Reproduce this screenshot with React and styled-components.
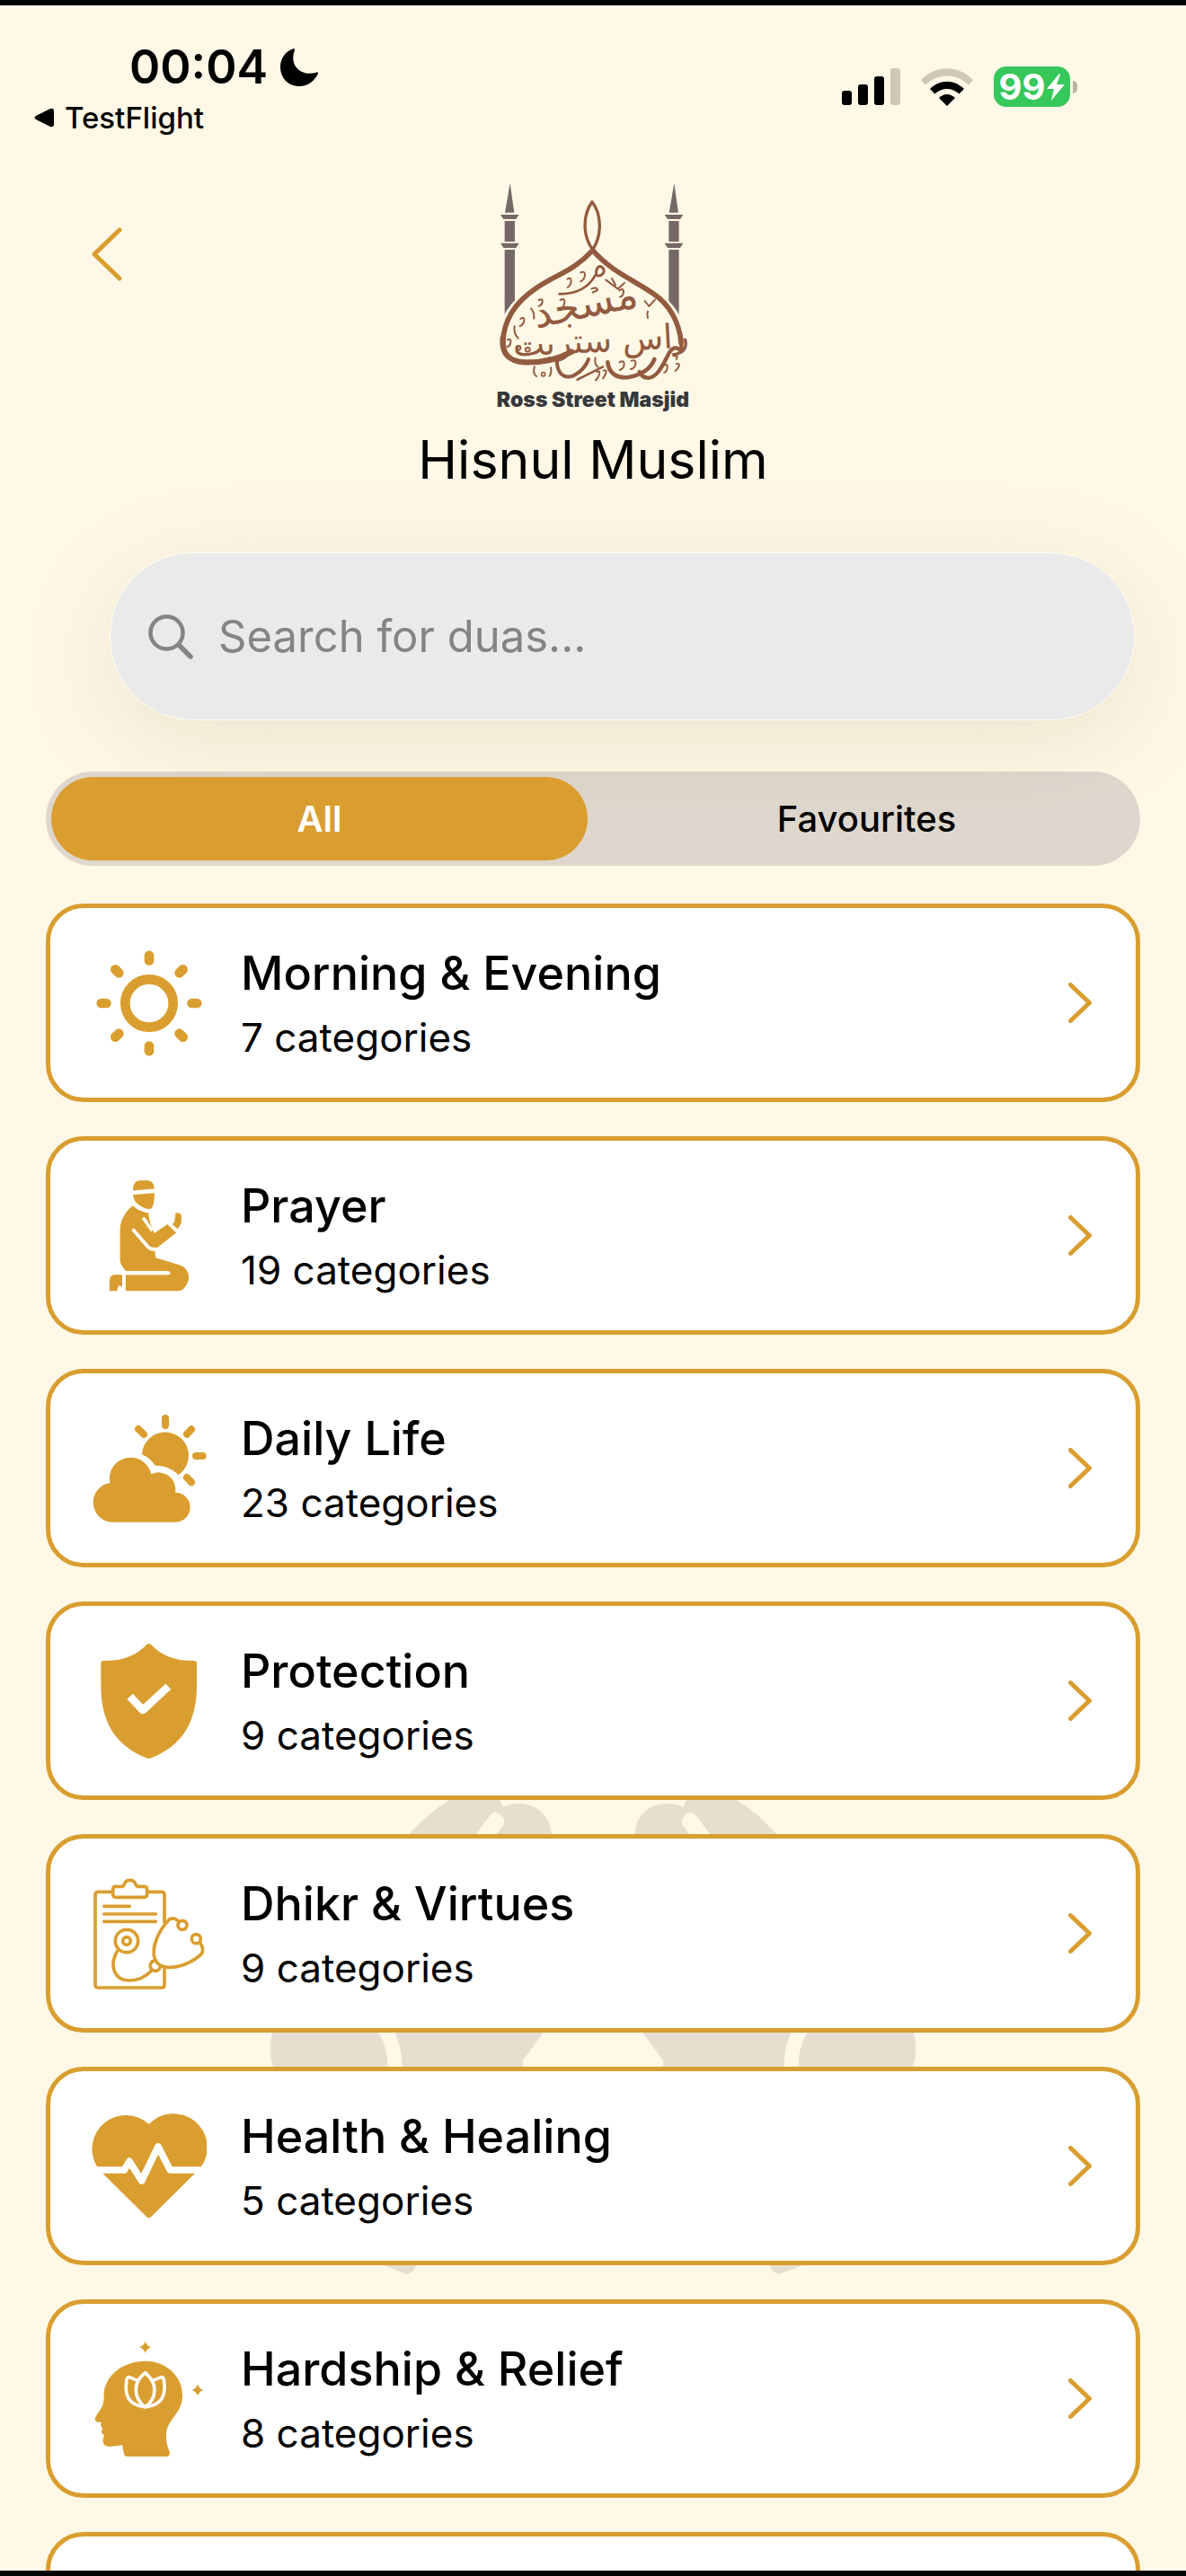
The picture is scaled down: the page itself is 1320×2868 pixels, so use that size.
import React, { useState } from 'react'
import styled, { createGlobalStyle } from 'styled-components'

const gold = '#d99e2f'
const cream = '#fff8e6'

const GlobalStyle = createGlobalStyle`
    * {
        box-sizing: border-box;
    }
    body {
        margin: 0;
        background: ${cream};
        color: #000;
        font-family: Inter, "Liberation Sans", sans-serif;
    }
    button, input {
        font-family: inherit;
    }
`

const Screen = styled.div`
    display: flex;
    flex-direction: column;
    height: 100vh;
    overflow: hidden;
    border-top: 6px solid #000;
    border-bottom: 6px solid #000;
    background: ${cream};
`

const StatusBar = styled.div`
    display: flex;
    flex-shrink: 0;
    justify-content: space-between;
    align-items: flex-start;
    padding: 39px 121px 0 38px;
`
const StatusLeft = styled.div`
    display: flex;
    flex-direction: column;
    gap: 4px;
`
const Clock = styled.div`
    display: flex;
    align-items: center;
    gap: 14px;
    padding-left: 106px;
    font-size: 52px;
    font-weight: 600;
    line-height: 60px;
`
const BackToApp = styled.a`
    display: flex;
    align-items: center;
    gap: 12px;
    color: #000;
    font-size: 33px;
    font-weight: 500;
    line-height: 44px;
    text-decoration: none;
`
const StatusIcons = styled.div`
    display: flex;
    align-items: center;
    gap: 23px;
    padding-top: 29px;
`
const BatteryWrap = styled.div`
    display: flex;
    align-items: center;
    gap: 3px;
`
const BatteryBody = styled.div`
    display: flex;
    align-items: center;
    justify-content: center;
    gap: 2px;
    width: 85px;
    height: 45px;
    border-radius: 14px;
    background: #36c85a;
    color: #fff;
    font-size: 40px;
    font-weight: 700;
`
const BatteryTip = styled.div`
    width: 5px;
    height: 14px;
    border-radius: 0 5px 5px 0;
    background: #b9b3a6;
`

const Header = styled.header`
    display: grid;
    flex-shrink: 0;
    grid-template-columns: 1fr auto 1fr;
    padding: 47px 51px 0;
`
const BackButton = styled.button`
    align-self: start;
    justify-self: start;
    margin-top: 40px;
    padding: 12px 49px;
    border: 0;
    background: none;
    svg {
        display: block;
    }
`
const Brand = styled.div`
    display: flex;
    flex-direction: column;
    align-items: center;
`
const BrandName = styled.div`
    color: #37383c;
    font-size: 23px;
    font-weight: 900;
    line-height: 34px;
`
const Title = styled.h1`
    margin: 14px 0 0;
    font-size: 59px;
    font-weight: 400;
    line-height: 72px;
`

const SearchBox = styled.label`
    display: flex;
    flex-shrink: 0;
    align-items: center;
    gap: 28px;
    height: 187px;
    margin: 67px 57px 0 122px;
    padding: 0 42px;
    border: 1px solid #fffdf2;
    border-radius: 93px;
    background: #eaeaea;
    box-shadow: 0 24px 110px rgba(90, 90, 40, 0.13);
`
const SearchInput = styled.input`
    flex: 1;
    min-width: 0;
    padding: 0;
    border: 0;
    outline: 0;
    background: none;
    font-size: 49px;
    &::placeholder {
        color: #848484;
        opacity: 1;
    }
`

const Tabs = styled.div`
    display: flex;
    flex-shrink: 0;
    gap: 12px;
    margin: 57px 51px 0;
    padding: 6px;
    border-radius: 53px;
    background: rgba(120, 112, 130, 0.24);
`
const Tab = styled.button`
    flex: 1;
    height: 93px;
    border: 0;
    border-radius: 47px;
    background: ${({ $active }) => ($active ? gold : 'transparent')};
    color: ${({ $active }) => ($active ? '#fff' : '#000')};
    font-size: 40px;
    font-weight: ${({ $active }) => ($active ? 600 : 500)};
`

const List = styled.main`
    position: relative;
    display: flex;
    flex-shrink: 0;
    flex-direction: column;
    gap: 38px;
    padding: 42px 51px 0;
`
const Watermark = styled.svg`
    position: absolute;
    top: 1026px;
    left: 50%;
    width: 720px;
    height: 545px;
    margin-left: -360px;
`
const Card = styled.button`
    position: relative;
    display: flex;
    align-items: center;
    gap: 38px;
    width: 100%;
    min-height: 221px;
    padding: 0 49px 0 46px;
    border: 5px solid ${gold};
    border-radius: 42px;
    background: #fff;
    color: #000;
    text-align: left;
`
const CardIcon = styled.svg`
    flex-shrink: 0;
    width: 128px;
    height: 128px;
`
const CardText = styled.span`
    display: flex;
    flex: 1;
    flex-direction: column;
`
const CardTitle = styled.span`
    font-size: 52px;
    font-weight: 500;
    line-height: 76px;
`
const CardCount = styled.span`
    font-size: 44px;
    line-height: 66px;
`

const SunIcon = () => (
    <CardIcon viewBox="-64 -64 128 128" fill="none" stroke={gold} strokeWidth="10.7" strokeLinecap="round">
        <circle r="26.7" />
        {[0, 45, 90, 135, 180, 225, 270, 315].map(angle => (
            <path key={angle} d="M0 -53.2V-47.6" transform={`rotate(${angle})`} />
        ))}
    </CardIcon>
)

const PrayerIcon = () => (
    <CardIcon viewBox="0 0 128 128" fill={gold}>
        <path d="M46.1 13.4V12C46.1 6 49 2.2 54 2.2H62C66.5 2.2 69.8 6 69.8 11.5Z" />
        <path d="M46.1 18.2L69.8 16.2C70 20 69.8 24 68.9 28C68 32.5 66 34.6 63 34.2C54 32 46 26 46.1 18.2Z" />
        <path d="M46.1 30.2C50 34.5 56 37.5 63 38.2L65 49.2L69.8 60.9L84.4 50.9L94.1 60.5L75 75.5Q72 78 70.3 81.5L71.3 88.2L98 96.5C105 99 108 104 108.1 110C108 116 103 125.2 97 125.2H37.9V107.2H84V103.2H38.3C34 98 31.6 95 31.6 89.9V56.5C32 46 38 36 46.1 30.2Z" />
        <path d="M93.5 38.2C98 37.8 99.9 39.5 99.9 42V48Q99.9 51 95.5 56.2L89.7 50.9Q92.6 49 92.6 45Z" />
        <path d="M19.9 125.2V115C19.9 110 22 107.2 26 107.2H34V120.5L30.1 118.9L28.2 125.2Z" />
        <path d="M58.2 45L66.5 57" stroke="#fff" strokeWidth="3.6" strokeLinecap="round" />
        <path d="M46.5 57.5L63 76.5Q66 80 74 78.5" fill="none" stroke="#fff" strokeWidth="3.8" strokeLinecap="round" />
        <path d="M34 105.2H85.5" stroke="#fff" strokeWidth="4" strokeLinecap="round" />
    </CardIcon>
)

const DailyIcon = () => (
    <CardIcon viewBox="66 93 384 384" fill={gold}>
        <path d="M132 464A66 66 0 0 1 127 333A70 70 0 0 1 265 304A56 56 0 0 1 345 365A49.5 49.5 0 0 1 346 464Z" />
        <path d="M234 238A78 78 0 1 1 360 303Q355 308 350 301Q320 274 278 275Q262 250 234 238Z" />
        <path
            d="M312 117V141M222 153L240 171M399 154L384 170M414 243H437M384 315L399 331"
            stroke={gold}
            strokeWidth="24"
            strokeLinecap="round"
        />
    </CardIcon>
)

const ShieldIcon = () => (
    <CardIcon viewBox="66 90 384 384" fill={gold}>
        <path d="M250 93Q257 87 264 93C300 130 340 147 408 147Q417 147 417 156V230C417 350 370 430 264 472Q257 475 250 472C144 430 97 350 97 230V156Q97 147 106 147C174 147 214 130 250 93Z" />
        <path d="M194 266L237 312L322 233" fill="none" stroke="#fff" strokeWidth="26" strokeLinejoin="round" />
    </CardIcon>
)

const ClipboardIcon = () => (
    <CardIcon viewBox="66 59 384 384" fill="none" stroke={gold} strokeWidth="11" strokeLinecap="round" strokeLinejoin="round">
        <path d="M132 111H88Q78 111 78 121V421Q78 431 88 431H299Q309 431 309 421V368M255 111H299Q309 111 309 121V212" />
        <path d="M147 93H165Q173 93 175 86A20 20 0 0 1 213 86Q215 93 223 93H241Q251 93 251 103V119Q251 129 241 129H147Q137 129 137 119V103Q137 93 147 93Z" />
        <path d="M107 159H193M107 185H280M107 210H280" />
        <circle cx="183" cy="275" r="38" />
        <circle cx="183" cy="275" r="13" />
        <path d="M153 306C120 360 145 407 192 407C225 407 248 393 266 374" />
        <path d="M273 342A17 17 0 1 0 295 363" />
        <path d="M355 208Q340 195 325 203C285 245 265 300 277 335C283 350 295 362 320 363C360 365 405 345 432 319Q443 305 430 284" />
        <circle cx="369" cy="222" r="15" />
        <circle cx="415" cy="268" r="15" />
    </CardIcon>
)

const HeartIcon = () => (
    <CardIcon viewBox="66 56 384 384" fill={gold}>
        <path d="M257 107A113 113 0 0 0 84 249L104 272L250 417Q257 423 264 417L410 272L432 249A113 113 0 0 0 257 107Z" />
        <path
            d="M60 260H175L192 231L233 296L288 182L328 260H456"
            fill="none"
            stroke="#fff"
            strokeWidth="23"
            strokeLinejoin="round"
        />
    </CardIcon>
)

const MindIcon = () => (
    <CardIcon viewBox="66 54 384 384" fill={gold}>
        <path d="M245 119C315 119 369 170 369 232C369 300 315 310 315 370C315 395 320 405 327 424Q328 438 316 438H185Q176 438 174 430L168 400C150 402 135 406 120 404C104 402 100 388 108 366Q98 362 99 352L103 346Q94 336 98 323H88Q74 322 78 308C90 285 107 275 107 240C103 170 170 119 245 119Z" />
        <path
            d="M245 158C225 175 214 190 214 215C214 240 228 260 245 273C262 260 276 240 276 215C276 190 262 175 245 158ZM219 184L192 173Q184 172 183 182C175 230 185 265 245 273C305 265 315 230 307 182Q306 172 298 173L271 184"
            fill="none"
            stroke="#fff"
            strokeWidth="11"
            strokeLinejoin="round"
        />
        <path d="M245 54Q250 68 264 73Q250 78 245 92Q240 78 226 73Q240 68 245 54ZM420 197Q425 211 439 216Q425 221 420 235Q415 221 401 216Q415 211 420 197Z" />
    </CardIcon>
)

const Minaret = ({ x }) => (
    <g transform={`translate(${x} 0)`} fill="#766867">
        <path d="M0 42L14 140H-17Z" />
        <path d="M-32 147H30L20 162H-22ZM-18 168H16V237H-18ZM-32 242H30L20 258H-22ZM-18 264H16V482H-18Z" />
    </g>
)

const MosqueLogo = () => (
    <svg width="220" height="228" viewBox="87 30 660 684" role="img" aria-label="مسجد راس ستريت">
        <Minaret x={140} />
        <Minaret x={688} />
        <path
            d="M110 600C108 500 150 440 230 395C290 360 350 335 414 270C480 340 560 370 620 415C680 450 718 510 716 600Z"
            fill={cream}
            stroke={cream}
            strokeWidth="28"
        />
        <g fill="none" stroke="#925b40" strokeLinecap="round" strokeLinejoin="round">
            <path d="M414 104C384 145 380 215 416 264C448 215 446 145 414 104Z" strokeWidth="10" />
            <path d="M416 266C350 338 295 345 225 394C160 438 118 500 116 575" strokeWidth="17" />
            <path d="M116 560C112 610 135 638 190 640C240 641 300 630 345 605" strokeWidth="19" />
            <path d="M416 266C480 340 560 368 620 412C670 445 706 505 711 575" strokeWidth="17" />
            <path d="M710 560Q714 590 711 602C695 585 680 590 668 615C650 650 630 695 598 692Q580 690 572 672" strokeWidth="13" />
            <path d="M466 640C470 680 500 694 535 690C580 682 610 660 622 630" strokeWidth="14" />
            <path d="M296 635C298 680 320 696 352 685C380 670 395 650 402 630" strokeWidth="12" />
            <path d="M365 698L450 655M305 412C360 412 400 395 424 350" strokeWidth="8" />
            <path d="M428 350C425 320 440 315 450 325C460 340 445 355 428 350" strokeWidth="9" />
            <path
                d="M332 362q12-8 12 6t-12 22M376 340q14-6 14 8t-14 22M308 432q16-8 14 8t-14 26M236 432q14-6 12 6t-12 14M210 460q12 12 10 34M175 495q14-8 12 6t-14 18M155 520q-4 22 12 40M132 565q12-6 10 8t-12 16M222 655q-8 20 6 32M276 658q4 18-4 28M505 640q16-8 16 6t-14 20M545 635q16-6 14 10t-16 18M425 625q-4 22 8 30M430 672q12-6 8 8t-12 20M452 668q12-4 8 8t-10 18M655 650q12-6 10 8t-10 16M690 620q12-6 6 10M696 645q12-2 8 8t-12 16M505 400q14-10 14 4t-12 18M460 365l40 30l22-20M480 360l12 22M590 435l14 18l20-22M600 470q-4 12 0 22M412 395q20-8 20 4l-16 8"
                strokeWidth="6"
            />
            <circle cx="168" cy="592" r="7" strokeWidth="6" />
            <circle cx="199" cy="598" r="7" strokeWidth="6" />
            <circle cx="251" cy="680" r="6" strokeWidth="5" />
        </g>
        <g fill="#925b40" fontFamily='"DejaVu Sans", sans-serif' textAnchor="middle">
            <text x="400" y="490" fontSize="136" transform="rotate(-12 400 490)">مسجد</text>
            <text x="445" y="605" fontSize="112" transform="rotate(-3 445 605)">راس ستريت</text>
        </g>
    </svg>
)

const Hand = () => (
    <>
        <path d="M420 2090C440 2060 465 2025 499 2005Q530 1985 553 1998L560 2012Q568 2008 577 2008C600 2008 614 2025 614 2045V2230L604 2264L582 2294V2330L463 2523Q458 2534 450 2531L400 2512L330 2400Q306 2330 304 2302Q298 2280 303 2264Z" />
        <path d="M529 2043L544 2023Q551 2014 558 2021Q564 2028 559 2034L552 2043L540 2066H515Z" fill={cream} />
        <path d="M422 2248C436 2270 441 2285 439 2310" fill="none" stroke={cream} strokeWidth="16" />
    </>
)

const categories = [
    { name: 'Morning & Evening', count: 7, Icon: SunIcon },
    { name: 'Prayer', count: 19, Icon: PrayerIcon },
    { name: 'Daily Life', count: 23, Icon: DailyIcon },
    { name: 'Protection', count: 9, Icon: ShieldIcon },
    { name: 'Dhikr & Virtues', count: 9, Icon: ClipboardIcon },
    { name: 'Health & Healing', count: 5, Icon: HeartIcon },
    { name: 'Hardship & Relief', count: 8, Icon: MindIcon }
]

const StatusRow = () => (
    <StatusBar>
        <StatusLeft>
            <Clock>
                <span>00:04</span>
                <svg width="42" height="42" viewBox="0 0 42 42">
                    <path d="M15 0C5 3 0 12 0 20C0 33 9 42 21 42C31 42 38 36 42 28C42 26 41 26 39 27C24 31 11 20 15 5Q17 0 15 0Z" />
                </svg>
            </Clock>
            <BackToApp href="#testflight">
                <svg width="22" height="22" viewBox="0 0 22 22">
                    <path d="M2 9L18 1Q22 0 22 4V18Q22 22 18 21L2 13Q-1 11 2 9Z" />
                </svg>
                TestFlight
            </BackToApp>
        </StatusLeft>
        <StatusIcons>
            <svg width="65" height="41" viewBox="0 0 65 41">
                <rect y="25" width="11" height="16" rx="3" />
                <rect x="18" y="18" width="11" height="23" rx="3" />
                <rect x="36" y="9" width="11" height="32" rx="3" />
                <rect x="54" width="11" height="41" rx="3" fill="#cfc7b8" />
            </svg>
            <svg width="58" height="42" viewBox="0 0 58 42">
                <path d="M0 13C16-4 42-4 58 13L53 18.5C40 5 18 5 5 18.5Z" fill="#cfc7b8" />
                <path d="M10 23C21 12 37 12 48 23L42.5 28.5C35 21 23 21 15.5 28.5Z" />
                <path d="M20 33Q29 25 38 33L29 42Z" />
            </svg>
            <BatteryWrap>
                <BatteryBody>
                    99
                    <svg width="20" height="30" viewBox="0 0 20 30" fill="#fff">
                        <path d="M14 0L0 17H8L5 30L20 12H11L15 1Z" />
                    </svg>
                </BatteryBody>
                <BatteryTip />
            </BatteryWrap>
        </StatusIcons>
    </StatusBar>
)

const CategoryCard = ({ name, count, Icon }) => (
    <Card type="button">
        <Icon />
        <CardText>
            <CardTitle>{name}</CardTitle>
            <CardCount>{count} categories</CardCount>
        </CardText>
        <svg width="26" height="45" viewBox="0 0 26 45" fill="none" stroke={gold} strokeWidth="5" strokeLinecap="round" strokeLinejoin="round">
            <path d="M2.5 2.5L23.5 22.5L2.5 42.5" />
        </svg>
    </Card>
)

export default function App() {
    const [tab, setTab] = useState('All')
    const [query, setQuery] = useState('')

    const visible = categories.filter(({ name }) => name.toLowerCase().includes(query.toLowerCase()))

    return (
        <Screen>
            <GlobalStyle />
            <StatusRow />
            <Header>
                <BackButton type="button" aria-label="Back">
                    <svg width="36" height="62" viewBox="0 0 36 62" fill="none" stroke={gold} strokeWidth="5" strokeLinecap="round" strokeLinejoin="round">
                        <path d="M33 4L5 31L33 58" />
                    </svg>
                </BackButton>
                <Brand>
                    <MosqueLogo />
                    <BrandName>Ross Street Masjid</BrandName>
                    <Title>Hisnul Muslim</Title>
                </Brand>
            </Header>
            <SearchBox>
                <svg width="50" height="50" viewBox="0 0 50 50" fill="none" stroke="#848484" strokeWidth="4.5" strokeLinecap="round">
                    <circle cx="20.5" cy="20.5" r="18" />
                    <path d="M34 34L47 47" strokeWidth="5.5" />
                </svg>
                <SearchInput
                    type="text"
                    aria-label="Search for duas"
                    placeholder="Search for duas..."
                    value={query}
                    onChange={e => setQuery(e.target.value)}
                />
            </SearchBox>
            <Tabs role="tablist">
                {['All', 'Favourites'].map(label => (
                    <Tab
                        key={label}
                        type="button"
                        role="tab"
                        aria-selected={tab === label}
                        $active={tab === label}
                        onClick={() => setTab(label)}>
                        {label}
                    </Tab>
                ))}
            </Tabs>
            <List>
                <Watermark viewBox="300 1990 720 545" fill="#e5dfcf" aria-hidden="true">
                    <Hand />
                    <g transform="translate(1320 0) scale(-1 1)">
                        <Hand />
                    </g>
                </Watermark>
                {visible.map(item => <CategoryCard key={item.name} {...item} />)}
                <Card as="div" aria-hidden="true" />
            </List>
        </Screen>
    )
}
